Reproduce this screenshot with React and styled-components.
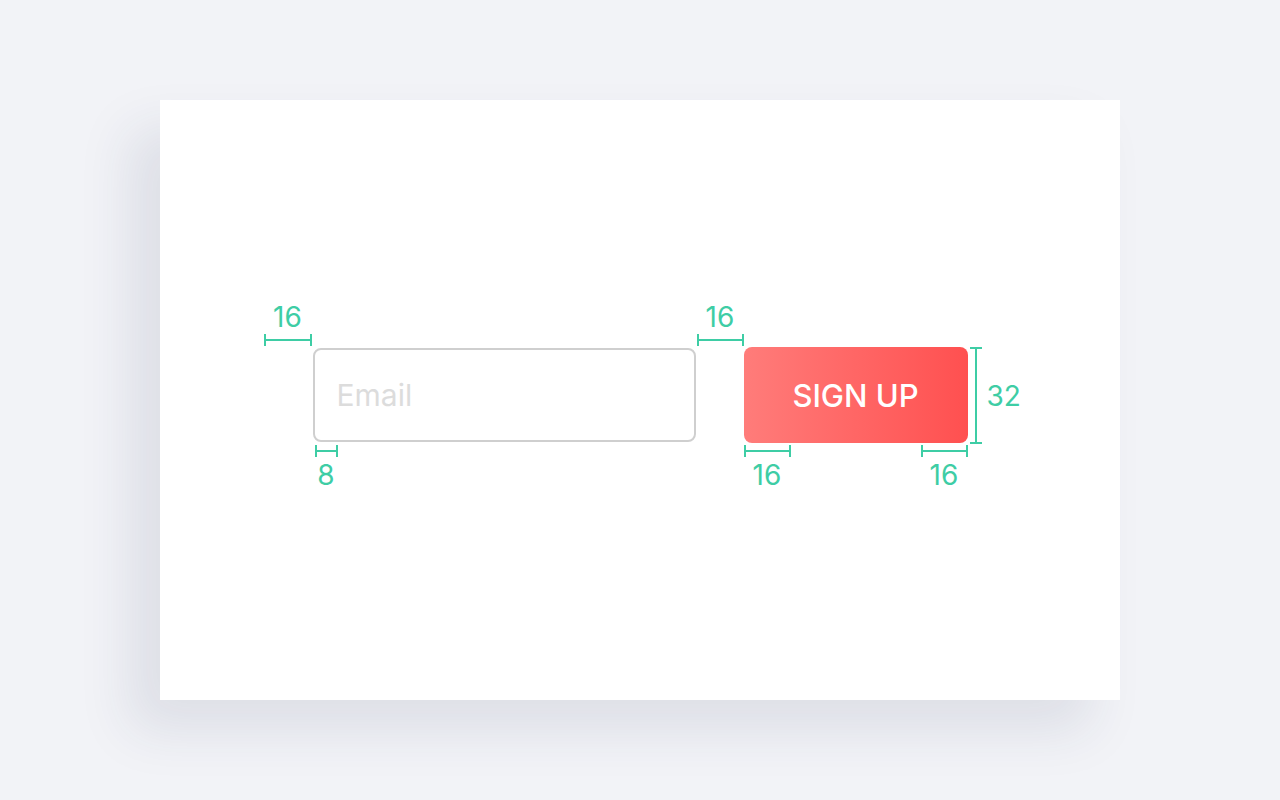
import React from 'react';
import styled, { createGlobalStyle } from 'styled-components';

const GlobalStyle = createGlobalStyle`
  html, body {
    margin: 0;
    padding: 0;
    background: #f2f3f7;
    font-family: Inter, "Liberation Sans", sans-serif;
  }
`;

const MARK = '#3ecda5';

const Page = styled.div`
  min-height: 100vh;
  display: flex;
  justify-content: center;
  padding-top: 100px;
  box-sizing: border-box;
`;

const Card = styled.section`
  width: 960px;
  height: 600px;
  background: #fff;
  box-shadow: -30px 30px 50px rgba(40, 52, 84, 0.1);
  display: flex;
  align-items: center;
  justify-content: center;
`;

const Form = styled.form`
  display: flex;
  align-items: center;
  gap: 48px;
  margin-top: -10px;
`;

const Field = styled.div`
  position: relative;
`;

const EmailInput = styled.input`
  display: block;
  width: 383px;
  height: 94px;
  box-sizing: border-box;
  padding: 0 22px;
  border: 2px solid #cfcfcf;
  border-radius: 8px;
  font-family: inherit;
  font-size: 30px;
  color: #333;
  outline: none;

  &::placeholder {
    color: #dcdcdc;
  }
`;

const SignUp = styled.button`
  display: block;
  width: 224px;
  height: 96px;
  border: 0;
  border-radius: 8px;
  background: linear-gradient(90deg, #ff7c7a 0%, #ff5050 100%);
  color: #fff;
  font-family: inherit;
  font-size: 31px;
  font-weight: 500;
  cursor: pointer;
`;

/* dimension markers drawn over the controls */
const HMark = styled.div`
  position: absolute;
  top: ${(p) => p.$top}px;
  left: ${(p) => (p.$left !== undefined ? `${p.$left}px` : 'auto')};
  right: ${(p) => (p.$right !== undefined ? `${p.$right}px` : 'auto')};
  width: ${(p) => p.$width}px;
  height: 12px;
  border-left: 2px solid ${MARK};
  border-right: 2px solid ${MARK};
  box-sizing: border-box;

  &::before {
    content: '';
    position: absolute;
    left: 0;
    right: 0;
    top: 5px;
    height: 2px;
    background: ${MARK};
  }
`;

const VMark = styled.div`
  position: absolute;
  top: 0;
  bottom: -1px;
  left: ${(p) => p.$left}px;
  width: 12px;
  border-top: 2px solid ${MARK};
  border-bottom: 2px solid ${MARK};
  box-sizing: border-box;

  &::before {
    content: '';
    position: absolute;
    top: 0;
    bottom: 0;
    left: 5px;
    width: 2px;
    background: ${MARK};
  }
`;

const Label = styled.span`
  position: absolute;
  left: 50%;
  transform: translateX(-50%);
  ${(p) => (p.$below ? 'top: 15px;' : 'bottom: 14px;')}
  color: ${MARK};
  font-size: 28px;
  line-height: 30px;
  white-space: nowrap;
`;

const SideLabel = styled.span`
  position: absolute;
  top: 50%;
  left: 17px;
  transform: translateY(-50%);
  color: ${MARK};
  font-size: 28px;
  line-height: 30px;
`;

export default function App() {
  return (
    <>
      <GlobalStyle />
      <Page>
        <Card>
          <Form onSubmit={(e) => e.preventDefault()}>
            <Field>
              <EmailInput type="email" placeholder="Email" />
              <HMark $top={-14} $left={-49} $width={48}>
                <Label>16</Label>
              </HMark>
              <HMark $top={97} $left={2} $width={23}>
                <Label $below>8</Label>
              </HMark>
            </Field>
            <Field>
              <SignUp type="submit">SIGN UP</SignUp>
              <HMark $top={-13} $left={-47} $width={47}>
                <Label>16</Label>
              </HMark>
              <HMark $top={98} $left={0} $width={47}>
                <Label $below>16</Label>
              </HMark>
              <HMark $top={98} $right={0} $width={47}>
                <Label $below>16</Label>
              </HMark>
              <VMark $left={226}>
                <SideLabel>32</SideLabel>
              </VMark>
            </Field>
          </Form>
        </Card>
      </Page>
    </>
  );
}
